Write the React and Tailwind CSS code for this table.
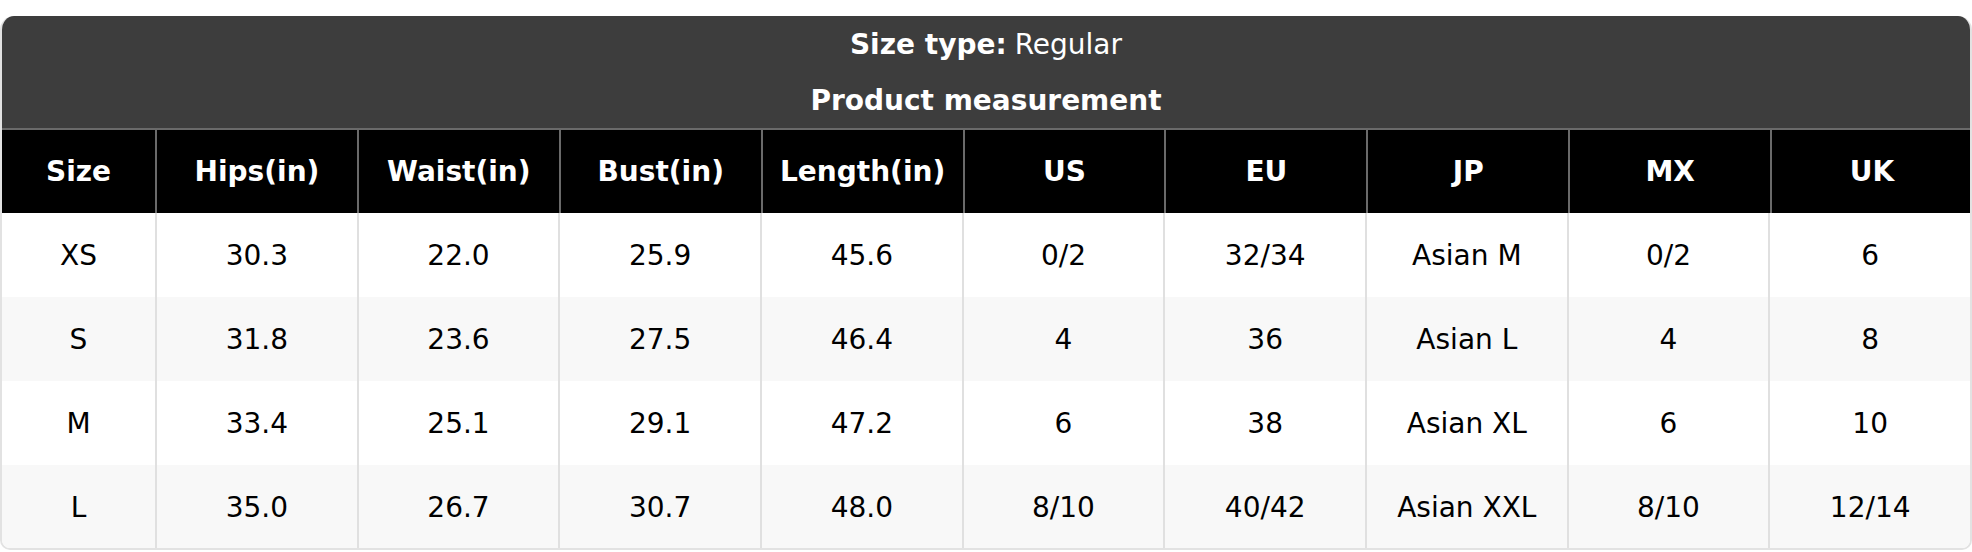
import React from 'react'

const headers = ['Size', 'Hips(in)', 'Waist(in)', 'Bust(in)', 'Length(in)', 'US', 'EU', 'JP', 'MX', 'UK']

const rows = [
  ['XS', '30.3', '22.0', '25.9', '45.6', '0/2', '32/34', 'Asian M', '0/2', '6'],
  ['S', '31.8', '23.6', '27.5', '46.4', '4', '36', 'Asian L', '4', '8'],
  ['M', '33.4', '25.1', '29.1', '47.2', '6', '38', 'Asian XL', '6', '10'],
  ['L', '35.0', '26.7', '30.7', '48.0', '8/10', '40/42', 'Asian XXL', '8/10', '12/14'],
]

export default function App() {
  return (
    <div className="w-[1972px] h-[552px] bg-white pt-4" style={{ fontFamily: '"DejaVu Sans", Verdana, sans-serif' }}>
      <div className="rounded-t-[14px] rounded-b-[10px] overflow-hidden border-2 border-t-0 border-[#e2e2e2]">
        {/* Title block */}
        <div className="bg-[#3d3d3d] text-white text-center text-[28px] -mx-[2px]">
          <div className="h-[56px] pt-[2px] flex items-center justify-center">
            <span className="font-bold">Size type:</span>
            <span className="ml-2">Regular</span>
          </div>
          <div className="h-[56px] pt-[2px] flex items-center justify-center font-bold">Product measurement</div>
        </div>

        {/* Header row */}
        <div className="grid grid-cols-[153px_repeat(9,1fr)] bg-black border-t-2 border-[#6a6a6a] -mx-[2px] pl-[2px]">
          {headers.map((h, i) => (
            <div
              key={h}
              className={`h-[83px] flex items-center justify-center text-white font-bold text-[28px] ${i > 0 ? 'border-l-2 border-[#6a6a6a]' : ''}`}
            >
              {h}
            </div>
          ))}
        </div>

        {/* Body rows */}
        {rows.map((row, r) => (
          <div
            key={row[0]}
            className={`grid grid-cols-[153px_repeat(9,1fr)] ${r % 2 === 1 ? 'bg-[#f8f8f8]' : 'bg-white'}`}
          >
            {row.map((cell, i) => (
              <div
                key={i}
                className={`${r === 3 ? 'h-[83px]' : 'h-[84px]'} pt-[2px] flex items-center justify-center text-black text-[28px] ${i > 0 ? 'border-l-2 border-[#e0e0e0]' : ''}`}
              >
                {cell}
              </div>
            ))}
          </div>
        ))}
      </div>
    </div>
  )
}
